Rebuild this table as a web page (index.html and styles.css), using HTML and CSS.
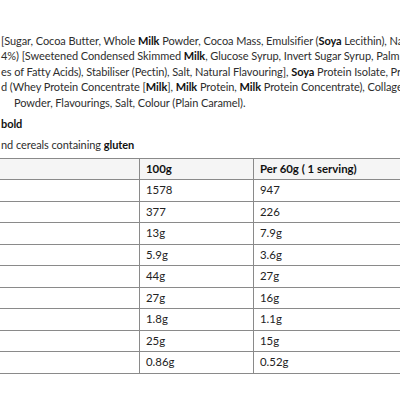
FILE: index.html
```html
<!DOCTYPE html>
<html lang="en">
<head>
<meta charset="utf-8">
<title>Nutrition</title>
<link rel="stylesheet" href="styles.css">
</head>
<body>
<div class="page">
  <div class="ingredients">
    <div class="line">[Sugar, Cocoa Butter, Whole <b>Milk</b> Powder, Cocoa Mass, Emulsifier (<b>Soya</b> Lecithin), Natural Flavouring],</div>
    <div class="line">4%) [Sweetened Condensed Skimmed <b>Milk</b>, Glucose Syrup, Invert Sugar Syrup, Palm Oil,</div>
    <div class="line">es of Fatty Acids), Stabiliser (Pectin), Salt, Natural Flavouring], <b>Soya</b> Protein Isolate, Protein</div>
    <div class="line">d (Whey Protein Concentrate [<b>Milk</b>], <b>Milk</b> Protein, <b>Milk</b> Protein Concentrate), Collagen,</div>
    <div class="line indent">Powder, Flavourings, Salt, Colour (Plain Caramel).</div>
  </div>
  <p class="note"><b>bold</b></p>
  <p class="note">nd cereals containing <b>gluten</b></p>
  <table class="nutrition">
    <colgroup>
      <col class="c-label">
      <col class="c-100">
      <col class="c-serv">
    </colgroup>
    <thead>
      <tr><th></th><th>100g</th><th>Per 60g ( 1 serving)</th></tr>
    </thead>
    <tbody>
      <tr><td>Energy (kJ)</td><td>1578</td><td>947</td></tr>
      <tr><td>Energy (kcal)</td><td>377</td><td>226</td></tr>
      <tr><td>Fat</td><td>13g</td><td>7.9g</td></tr>
      <tr><td>of which saturates</td><td>5.9g</td><td>3.6g</td></tr>
      <tr><td>Carbohydrate</td><td>44g</td><td>27g</td></tr>
      <tr><td>of which sugars</td><td>27g</td><td>16g</td></tr>
      <tr><td>Fibre</td><td>1.8g</td><td>1.1g</td></tr>
      <tr><td>Protein</td><td>25g</td><td>15g</td></tr>
      <tr><td>Salt</td><td>0.86g</td><td>0.52g</td></tr>
    </tbody>
  </table>
</div>
</body>
</html>
```
FILE: styles.css
```css
html, body {
  margin: 0;
  padding: 0;
  background: #fff;
  overflow: hidden;
}
body {
  width: 400px;
  height: 400px;
  font-family: Lato, Inter, sans-serif;
  font-size: 11px;
  letter-spacing: -0.07px;
  color: #2e2e2e;
}
b { color: #111; font-weight: 700; }
.page {
  padding-top: 33px;
}
.ingredients {
  margin: 0 0 6px 1px;
  line-height: 15.4px;
}
.line {
  white-space: nowrap;
}
.indent { padding-left: 13px; }
.note {
  margin: 0 0 6px 1px;
  line-height: 15.4px;
  white-space: nowrap;
}
.nutrition {
  border-collapse: collapse;
  table-layout: fixed;
  width: 600px;
  margin-left: -61px;
  margin-top: -1px;
  font-size: 11.4px;
  letter-spacing: 0;
}
.c-label { width: 200px; }
.c-100 { width: 114px; }
.c-serv { width: 286px; }
.nutrition th,
.nutrition td {
  border: 1px solid #8a8a8a;
  padding: 3px 6px;
  line-height: 14.5px;
  text-align: left;
  color: #222;
}
.nutrition thead th {
  background: #f5f5f5;
  font-weight: 700;
  color: #111;
}
.nutrition td:first-child { color: transparent; }
```
